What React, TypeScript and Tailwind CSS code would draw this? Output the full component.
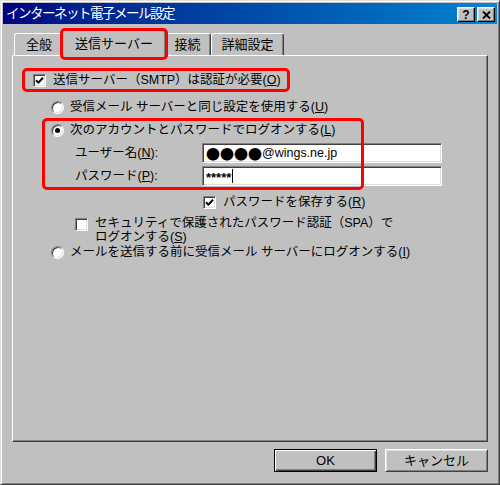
import React from 'react';

const Key = ({ k }: { k: string }) => (
    <>
        (<span className="underline underline-offset-1">{k}</span>)
    </>
);

const Radio = ({ checked }: { checked?: boolean }) => (
    <span className="flex h-[13px] w-[13px] shrink-0 items-center justify-center rounded-full border border-t-[#808080] border-l-[#808080] border-r-white border-b-white bg-white shadow-[inset_1px_1px_0_#404040,inset_-1px_-1px_0_#dfdfdf]">
        {checked && <span className="h-[5px] w-[5px] rounded-full bg-black" />}
    </span>
);

const Check = ({ checked }: { checked?: boolean }) => (
    <span className="flex h-[13px] w-[13px] shrink-0 items-center justify-center border border-t-[#808080] border-l-[#808080] border-r-white border-b-white bg-white shadow-[inset_1px_1px_0_#404040,inset_-1px_-1px_0_#dfdfdf]">
        {checked && (
            <svg width="9" height="9" viewBox="0 0 9 9">
                <path d="M1 4.2 L3.4 6.6 L8 1.8" stroke="#000" strokeWidth="2" fill="none" />
            </svg>
        )}
    </span>
);

const Tab = ({ label, width }: { label: string; width: string }) => (
    <div className={`flex h-[22px] ${width} items-center justify-center rounded-t-[3px] border-t border-l border-r border-t-white border-l-white border-r-[#404040] shadow-[inset_-1px_0_0_#808080] text-[13px] leading-none`}>
        {label}
    </div>
);

const sunken = 'border border-t-[#808080] border-l-[#808080] border-r-white border-b-white shadow-[inset_1px_1px_0_#404040,inset_-1px_-1px_0_#dfdfdf]';

export default function App() {
    return (
        <div className="flex h-[485px] w-[500px] flex-col border border-t-[#dfdfdf] border-l-[#dfdfdf] border-r-[#404040] border-b-[#404040] bg-[#c0c0c0] p-[2px] font-['Liberation_Sans','Noto_Sans_CJK_JP',sans-serif] text-[12.5px] text-black shadow-[inset_1px_1px_0_#fff,inset_-1px_-1px_0_#808080]">
            {/* title bar */}
            <div className="flex h-[21px] items-center bg-linear-to-r from-[#000080] to-[#1084d0] pl-[3px] pr-[2px]">
                <span className="text-[13.5px] leading-none tracking-[-1.5px] text-white">インターネット電子メール設定</span>
                <div className="ml-auto mt-[2px] flex gap-[2px]">
                    <div className="flex h-[15px] w-[18px] items-center justify-center border border-t-white border-l-white border-r-black border-b-black bg-[#c0c0c0] text-[12px] font-bold leading-none shadow-[inset_-1px_-1px_0_#808080,inset_1px_1px_0_#dfdfdf]">
                        ?
                    </div>
                    <div className="flex h-[15px] w-[18px] items-center justify-center border border-t-white border-l-white border-r-black border-b-black bg-[#c0c0c0] shadow-[inset_-1px_-1px_0_#808080,inset_1px_1px_0_#dfdfdf]">
                        <svg width="9" height="8" viewBox="0 0 9 8">
                            <path d="M1 0.5 L8 7.5 M8 0.5 L1 7.5" stroke="#000" strokeWidth="1.8" />
                        </svg>
                    </div>
                </div>
            </div>

            <div className="flex flex-1 flex-col px-[9px]">
                {/* tabs */}
                <div className="mt-[6px] flex h-[25px] items-end pl-[2px]">
                    <Tab label="全般" width="w-[50px]" />
                    <div className="relative z-10 -mx-[2px] -mb-[2px] flex h-[27px] w-[104px] items-center justify-center rounded-t-[3px] border-t border-l border-r border-t-white border-l-white border-r-[#404040] bg-[#c0c0c0] pb-[2px] text-[13px] leading-none shadow-[inset_-1px_0_0_#808080]">
                        送信サーバー
                        <span className="pointer-events-none absolute -inset-[3px] rounded-[5px] border-[3px] border-[#ff0000]" />
                    </div>
                    <Tab label="接続" width="w-[47px]" />
                    <Tab label="詳細設定" width="w-[73px]" />
                </div>

                {/* panel */}
                <div className="flex h-[387px] flex-col border border-t-white border-l-white border-r-[#404040] border-b-[#404040] shadow-[inset_-1px_-1px_0_#808080]">
                    <div className="ml-[9px] mt-[12px] flex h-[24px] w-[268px] items-center gap-[7px] rounded-[5px] border-[3px] border-[#ff0000] pl-[8px]">
                        <Check checked />
                        <span className="leading-none">送信サーバー（SMTP）は認証が必要<Key k="O" /></span>
                    </div>

                    <div className="ml-[38px] mt-[7px] flex h-[16px] items-center gap-[6px]">
                        <Radio />
                        <span className="leading-none">受信メール サーバーと同じ設定を使用する<Key k="U" /></span>
                    </div>

                    <div className="relative mt-[3px] pb-[4px] pt-[4px]">
                        <span className="pointer-events-none absolute left-[29px] top-0 h-[72px] w-[322px] rounded-[5px] border-[3px] border-[#ff0000]" />
                        <div className="ml-[38px] flex h-[16px] items-center gap-[6px]">
                            <Radio checked />
                            <span className="leading-none">次のアカウントとパスワードでログオンする<Key k="L" /></span>
                        </div>
                        <div className="ml-[62px] mt-[5px] flex h-[20px] items-center">
                            <span className="w-[127px] leading-none">ユーザー名<Key k="N" />:</span>
                            <div className={`flex h-[20px] w-[240px] items-center bg-white pl-[3px] ${sunken}`}>
                                <span className="font-['Noto_Sans_CJK_JP',sans-serif] text-[14px] leading-none">●●●●</span>
                                <span className="text-[12.5px] leading-none">@wings.ne.jp</span>
                            </div>
                        </div>
                        <div className="ml-[62px] mt-[3px] flex h-[20px] items-center">
                            <span className="w-[127px] leading-none">パスワード<Key k="P" />:</span>
                            <div className={`flex h-[20px] w-[240px] items-center bg-white pl-[3px] ${sunken}`}>
                                <span className="mt-[3px] text-[13px] font-bold leading-none">*****</span>
                                <span className="ml-[1px] h-[14px] w-[1px] bg-black" />
                            </div>
                        </div>
                    </div>

                    <div className="ml-[190px] mt-[4px] flex h-[16px] items-center gap-[7px]">
                        <Check checked />
                        <span className="leading-none">パスワードを保存する<Key k="R" /></span>
                    </div>

                    <div className="ml-[62px] mt-[6px] flex items-start gap-[7px]">
                        <span className="mt-[2px]">
                            <Check />
                        </span>
                        <span className="leading-[14px]">
                            セキュリティで保護されたパスワード認証（SPA）で
                            <br />
                            ログオンする<Key k="S" />
                        </span>
                    </div>

                    <div className="ml-[38px] flex h-[16px] items-center gap-[6px]">
                        <Radio />
                        <span className="leading-none">メールを送信する前に受信メール サーバーにログオンする<Key k="I" /></span>
                    </div>
                </div>

                {/* buttons */}
                <div className="mt-[7px] flex justify-end gap-[8px]">
                    <button className="flex h-[23px] w-[103px] items-center justify-center border border-black text-[13px] leading-none shadow-[inset_1px_1px_0_#fff,inset_-1px_-1px_0_#404040,inset_-2px_-2px_0_#808080]">
                        OK
                    </button>
                    <button className="flex h-[23px] w-[103px] items-center justify-center border border-t-white border-l-white border-r-[#404040] border-b-[#404040] text-[13px] leading-none shadow-[inset_1px_1px_0_#dfdfdf,inset_-1px_-1px_0_#808080]">
                        キャンセル
                    </button>
                </div>
            </div>
        </div>
    );
}
